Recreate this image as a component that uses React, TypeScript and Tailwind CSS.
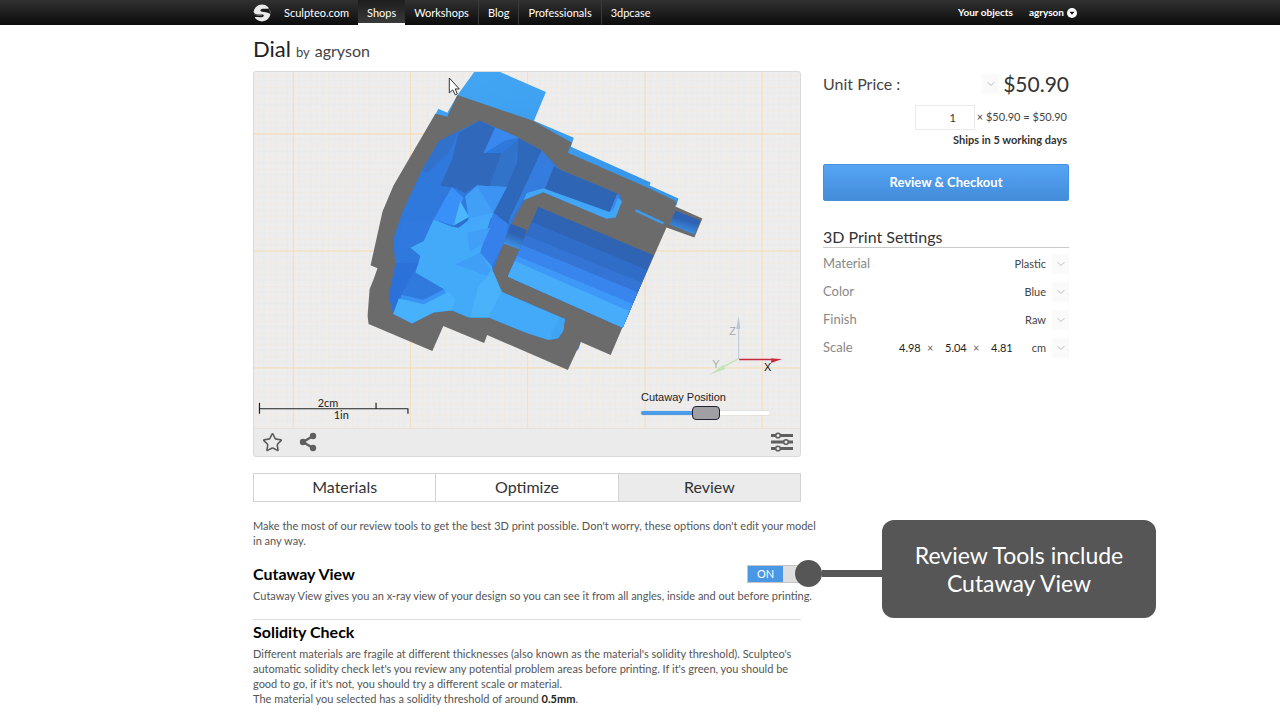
import React, { useState } from "react";
import { ChevronDown, Star } from "lucide-react";

const links = ["Sculpteo.com", "Shops", "Workshops", "Blog", "Professionals", "3dpcase"];

const settings = [
  { id: "material", label: "Material", options: ["Plastic", "Alumide", "Resin"] },
  { id: "color", label: "Color", options: ["Blue", "White", "Black"] },
  { id: "finish", label: "Finish", options: ["Raw", "Polished"] },
];

const tabs = ["Materials", "Optimize", "Review"];

function Logo() {
  return (
    <svg viewBox="0 0 18 18" className="h-[18px] w-[18px]" aria-hidden="true">
      <circle cx="9" cy="9" r="8.5" fill="#e9e9e9" />
      <path d="M18 3.8C14.500 5.600 11.500 4.200 8.600 5C6.800 5.600 7 7.400 9 7.700C12.500 8.200 15.500 8 18 10.500L16.500 6Z" fill="#1c1c1c" />
      <path d="M0 8C2 10.400 5.500 10.600 9 10.600C11.200 10.700 11.400 12.400 9.400 12.900C6 13.700 3 12.400 0 13.800Z" fill="#181818" />
      <path d="M1 9.8C3.500 11.800 6.500 11.600 9 11.400" stroke="#8b8b8b" strokeWidth="0.600" fill="none" />
    </svg>
  );
}

function Navbar() {
  return (
    <header className="bg-linear-to-b from-[#313131] to-[#0d0d0d] text-[11px] text-white">
      <div className="mx-auto flex h-[25px] max-w-[858px] items-center justify-between pl-[42px]">
        <nav className="flex h-full items-center">
          <Logo />
          <ul className="ml-1 flex h-full">
            {links.map((link) => (
              <li
                key={link}
                className={
                  link === "Shops"
                    ? "border-b-2 border-white bg-linear-to-b from-[#1d1d1d] to-[#3a3a3a]"
                    : link === "Sculpteo.com" || link === "3dpcase"
                      ? ""
                      : "border-r border-[#3a3a3a]"
                }
              >
                <a href="#" className="block px-[9px] leading-[25px]">
                  {link}
                </a>
              </li>
            ))}
          </ul>
        </nav>
        <div className="-mr-2 flex items-center gap-4 text-[10px] font-bold">
          <a href="#">Your objects</a>
          <button type="button" className="flex items-center gap-[3px]">
            agryson
            <svg viewBox="0 0 10 10" className="h-[10px] w-[10px]" aria-hidden="true">
              <circle cx="5" cy="5" r="5" fill="#fff" />
              <path d="M2.4 3.8h5.2L5 6.8z" fill="#111" />
            </svg>
          </button>
        </div>
      </div>
    </header>
  );
}

// Cut model: outer shell in grey, inner surfaces as blue facets
function Model() {
  return (
    <svg viewBox="253 72 548 357" className="block w-full" role="img" aria-label="Dial model, cut open">
      <defs>
        <pattern id="minor" x="292.5" y="134" width="11.75" height="11.75" patternUnits="userSpaceOnUse">
          <path d="M0 0H11.75M0 0V11.75" stroke="#f1e7da" strokeWidth="1.1" fill="none" />
          <path d="M0 5.9H11.75M5.9 0V11.75" stroke="#e8e8e7" strokeWidth="0.7" fill="none" />
        </pattern>
        <linearGradient id="pin" x1="0" y1="0" x2="-0.35" y2="1">
          <stop offset="0.2" stopColor="#2d62b4" />
          <stop offset="0.9" stopColor="#45a8fa" />
        </linearGradient>
        <linearGradient id="top" x1="0" y1="0" x2="0.3" y2="1">
          <stop offset="0" stopColor="#43a6f4" />
          <stop offset="1" stopColor="#3796ea" />
        </linearGradient>
      </defs>
      <rect x="253" y="72" width="548" height="357" fill="#eeeded" />
      <rect x="253" y="72" width="548" height="357" fill="url(#minor)" />
      <path
        d="M292.5 72V429M410 72V429M527.5 72V429M645.5 72V429M763 72V429M253 134H801M253 251.5H801M253 369H801"
        stroke="#f4dfc0"
        strokeWidth="1.3"
        fill="none"
      />
      <path
        d="M474 72H500L546 92L534 121L574 138L571 147L651 183L650 186L679 199L677 206L560 160L440 118L435 115L438 109L447 113L458 94Z"
        fill="url(#top)"
      />
      <path d="M581 343L577 348L578 352Z" fill="#3884f0" />
      <path
        d="M457 95L533 121L572 143L568 153L650 189L677 202L676 207L703 219L695 238L667 228L623 328L611 356L581 343L568 371L487 336L484 344L443 327L432 352L368 325L367 317L369 290L373 280L377 269L370 266L382 212L393 186L435 114L447 117Z"
        fill="#6b6b6b"
      />
      <g transform="translate(380 110) scale(0.33333)">
        <path
          d="M298 32L175 95L125 180L65 310L38 390L45 470L25 560L38 615L95 643L160 610L215 604L265 625H325L440 672L505 693L535 688L550 665L555 630L365 548L338 485L372 395L405 320L440 262L490 248L680 328L708 324L727 275L720 255L540 180L485 122L390 72Z"
          fill="#2f78dc"
        />
        <path d="M298 32L235 70L215 150L180 228L225 235L255 250L290 228L325 240L365 130L310 130L345 55Z" fill="#3069bb" />
        <path d="M235 62L175 95L125 180L140 190L205 130Z" fill="#3171c9" />
        <path d="M365 130L415 90L405 165L380 230L325 240Z" fill="#3273ca" />
        <path d="M345 53L418 84L375 92L310 132Z" fill="#3888f0" />
        <path d="M415 85L485 122L385 345L340 310L380 230L410 160Z" fill="#2e68bb" />
        <path d="M485 122L525 165L495 240L440 250L385 345L390 325Z" fill="#347cdd" />
        <path d="M522 170L540 180L720 255L690 306L495 238Z" fill="#2f65b5" />
        <path d="M340 310L385 345L372 400L335 470L300 430Z" fill="#3680ec" />
        <path d="M440 250L490 236L690 308L712 262L727 275L708 324L680 328L490 248L430 272Z" fill="#43a5f5" />
        <path d="M712 255L720 255L700 300L690 306Z" fill="#3a88ef" />
        <path d="M215 232L250 265L220 348L160 330L190 275Z" fill="#3990f8" />
        <path d="M125 330L160 330L130 395L90 415L45 430L65 340Z" fill="#3079de" />
        <path d="M255 260L290 228L380 232L335 315L265 325Z" fill="#419ff8" />
        <path
          d="M160 330L215 352L265 325L335 315L300 430L335 470L338 485L365 548L555 630L550 665L535 688L505 693L440 672L325 625H265L215 604L190 540L105 490L120 440L90 415L130 395Z"
          fill="#43aaf9"
        />
        <path d="M290 228L340 310L380 232Z" fill="#3d93f4" />
        <path d="M240 275L268 325L220 348Z" fill="#4bb8fd" />
        <path d="M215 352L268 322L262 335L235 355Z" fill="#2d70cf" />
        <path d="M265 325L340 310L335 325L270 355Z" fill="#44a7fb" />
        <path d="M260 370L330 355L310 400L270 428Z" fill="#419ff7" />
        <path d="M225 465L300 430L330 480L320 500Z" fill="#3f9ff7" />
        <path d="M45 462L115 460L60 560L38 610L25 560Z" fill="#2c70d9" />
        <path d="M105 492L190 540L125 560L62 555Z" fill="#3079dd" />
        <path d="M62 557L130 572L190 540L205 570L130 585L60 575Z" fill="#3993f3" />
        <path d="M55 568L130 585L205 548L225 570L215 604L160 610L95 643L38 615Z" fill="#47b1fc" />
        <path d="M338 485L365 548L325 625H270L295 530Z" fill="#49b2fa" />
        <path d="M540 625L555 630L550 665L535 688L510 680Z" fill="#3fa4f4" />
        <path d="M392 343L440 362L423 422L370 403Z" fill="url(#pin)" />
        <path d="M475 292L822 438L729 656L383 502Z" fill="#2f64b4" />
        <path d="M455 338L803 482L729 656L383 502Z" fill="#306dc8" />
        <path d="M437 377L786 520L729 656L383 502Z" fill="#3374d4" />
        <path d="M425 406L774 549L729 656L383 502Z" fill="#3985ee" />
        <path d="M411 440L759 584L729 656L383 502Z" fill="#3d98f8" />
        <path d="M404 455L748 606L729 656L383 502Z" fill="#47acfa" />
      </g>
      <path d="M636 211L664 224" stroke="#3f9bea" strokeWidth="2.5" />
      <path d="M676 211L701 221L695 235L670 225Z" fill="url(#pin)" />
      <path d="M449 78V93L452.5 90L455 95L457 94L455 89H459Z" fill="#fff" stroke="#333" strokeWidth="1" />
      <path d="M739.5 360V330" stroke="#b9c6d6" strokeWidth="1" />
      <path d="M737 330L739.5 317L741 330Z" fill="#b9c6d6" />
      <path d="M739 360L722 369" stroke="#c3e3b5" strokeWidth="1.5" />
      <path d="M724 366L710 376L726 370Z" fill="#c3e3b5" />
      <path d="M740 360.5H775" stroke="#c8283c" strokeWidth="1.5" />
      <path d="M772 359.5L783 360L772 364Z" fill="#c8283c" />
      <g fontFamily="Liberation Sans, sans-serif" fontSize="11">
        <text x="730" y="336" fill="#a9a9ae">Z</text>
        <text x="713" y="369" fill="#a9b5a5">Y</text>
        <text x="765" y="372" fill="#111">X</text>
      </g>
      <path d="M258.5 404V415M258 410H408M375.5 404V410M407.5 410V415" stroke="#222" strokeWidth="1.2" fill="none" />
      <g fontFamily="Lato, sans-serif" fontSize="11" fill="#222">
        <text x="317" y="408">2cm</text>
        <text x="333" y="420">1in</text>
      </g>
    </svg>
  );
}

function Viewer() {
  const [position, setPosition] = useState(50);

  return (
    <section className="relative overflow-hidden rounded-[3px] border border-[#d9d9d9] bg-[#ebebeb]">
      <Model />
      <div className="absolute right-[30px] bottom-[35px] flex w-[129px] flex-col">
        <label htmlFor="cutaway" className="font-['Liberation_Sans',sans-serif] text-[11px] leading-4 text-[#222]">
          Cutaway Position
        </label>
        <div className="flex h-4 items-center">
          <input
            id="cutaway"
            type="range"
            value={position}
            onChange={(e) => setPosition(Number(e.target.value))}
            style={{
              backgroundImage: `linear-gradient(to right, #4a9be8 ${position}%, #fff ${position}%)`,
            }}
            className="h-1 w-full appearance-none rounded-full shadow-[0_0_1px_#999] [&::-webkit-slider-thumb]:h-[14px] [&::-webkit-slider-thumb]:w-[28px] [&::-webkit-slider-thumb]:appearance-none [&::-webkit-slider-thumb]:rounded [&::-webkit-slider-thumb]:border [&::-webkit-slider-thumb]:border-[#222233] [&::-webkit-slider-thumb]:bg-[#a09fa3]"
          />
        </div>
      </div>
      <div className="flex h-[28px] items-center border-t border-[#e6e3df] pr-[7px] pl-2 text-[#5a5a5a]">
        <button type="button" aria-label="Add to favourites">
          <Star className="h-[21px] w-[21px]" strokeWidth={1.8} strokeLinejoin="miter" />
        </button>
        <button type="button" aria-label="Share" className="ml-4">
          <svg viewBox="0 0 18 20" className="h-5 w-[18px]" aria-hidden="true">
            <path d="M14 4L4 10L14 16" fill="none" stroke="#5f5f5f" strokeWidth="2.4" />
            <circle cx="14" cy="4" r="3.2" fill="#5f5f5f" />
            <circle cx="4" cy="10" r="3.2" fill="#5f5f5f" />
            <circle cx="14" cy="16" r="3.2" fill="#5f5f5f" />
          </svg>
        </button>
        <button type="button" aria-label="View options" className="ml-auto">
          <svg viewBox="0 0 22 20" className="h-5 w-[22px]" aria-hidden="true">
            <path d="M0 3.5H22M0 10H22M0 16.5H22" stroke="#5f5f5f" strokeWidth="2.8" />
            <g fill="#ebebeb" stroke="#5f5f5f" strokeWidth="1.6">
              <circle cx="7" cy="3.5" r="2.3" />
              <circle cx="15" cy="10" r="2.3" />
              <circle cx="7" cy="16.5" r="2.3" />
            </g>
          </svg>
        </button>
      </div>
    </section>
  );
}

function Chevron() {
  return (
    <span className="pointer-events-none col-start-1 row-start-1 flex h-5 w-[17px] items-center justify-center justify-self-end bg-[#fafafa]">
      <ChevronDown className="h-3 w-3 text-[#bbb]" />
    </span>
  );
}

function Select({ id, label, options }: { id: string; label?: string; options: string[] }) {
  return (
    <div className="grid items-center">
      <select
        id={id}
        aria-label={label}
        className="col-start-1 row-start-1 appearance-none bg-transparent pr-[23px] text-[11px] leading-5 text-[#444] [text-align-last:right]"
      >
        {options.map((option) => (
          <option key={option}>{option}</option>
        ))}
      </select>
      <Chevron />
    </div>
  );
}

function Sidebar() {
  return (
    <aside className="w-[246px] shrink-0 text-[#444]">
      <div className="flex h-[26px] items-center">
        <span className="flex-1 text-[16px]">Unit Price :</span>
        <button type="button" aria-label="Choose currency" className="mr-1 grid">
          <Chevron />
        </button>
        <span className="text-[21px] text-[#333]">$50.90</span>
      </div>
      <div className="mt-2 flex items-center justify-end pr-[2px] text-[11px]">
        <input
          type="text"
          aria-label="Quantity"
          defaultValue="1"
          className="mr-[2px] h-[25px] w-[60px] border border-[#eaeaea] pr-[18px] text-right text-[#333]"
        />
        × $50.90 = $50.90
      </div>
      <p className="mt-[2px] pr-[2px] text-right text-[11px] leading-4 font-bold text-[#333]">Ships in 5 working days</p>
      <button
        type="button"
        className="mt-4 h-[37px] w-full rounded-[2px] border border-[#4590da] bg-linear-to-b from-[#57a5f6] to-[#428cd9] text-[13px] font-bold text-white"
      >
        Review &amp; Checkout
      </button>

      <h2 className="mt-[26px] border-b border-[#c9c9c9] text-[16px] leading-5 text-[#333]">3D Print Settings</h2>
      <div className="mt-[2px]">
        {settings.map((s) => (
          <div key={s.id} className="flex h-[28px] items-center justify-between">
            <label htmlFor={s.id} className="text-[13px] text-[#888]">
              {s.label}
            </label>
            <Select id={s.id} options={s.options} />
          </div>
        ))}
        <div className="flex h-[28px] items-center text-[11px] text-[#222]">
          <label htmlFor="scale-x" className="flex-1 text-[13px] text-[#888]">
            Scale
          </label>
          <input id="scale-x" defaultValue="4.98" className="w-[24px]" />
          <span className="w-[22px] pl-1 text-[#666]">×</span>
          <input aria-label="Scale y" defaultValue="5.04" className="w-[24px]" />
          <span className="w-[22px] pl-1 text-[#666]">×</span>
          <input aria-label="Scale z" defaultValue="4.81" className="w-[24px]" />
          <div className="ml-4">
            <Select id="unit" label="Unit" options={["cm", "in"]} />
          </div>
        </div>
      </div>
    </aside>
  );
}

function Callout() {
  return (
    <div className="absolute -top-[45px] left-[48px] z-10 flex items-start">
      <span className="mt-[40px] h-[27px] w-[27px] rounded-full bg-[#565656]" />
      <span className="mt-[50px] h-[7px] w-[60px] bg-[#565656]" />
      <p className="flex h-[98px] w-[274px] items-center justify-center rounded-xl bg-[#565656] text-center text-[23px] leading-[28px] whitespace-nowrap text-white">
        Review Tools include
        <br />
        Cutaway View
      </p>
    </div>
  );
}

function App() {
  const [on, setOn] = useState(true);

  return (
    <div className="overflow-hidden bg-white font-[Lato,sans-serif]">
      <Navbar />
      <main className="mx-auto max-w-[858px] pl-[42px]">
        <h1 className="flex h-[46px] items-baseline gap-[5px] pt-[9px] text-[22px] leading-[30px] text-[#222]">
          Dial <span className="text-[13px] text-[#444]">by</span> <span className="text-[16px] text-[#444]">agryson</span>
        </h1>
        <div className="flex gap-[22px]">
          <div className="min-w-0 flex-1">
            <Viewer />
            <div role="tablist" className="mt-4 flex border border-[#d3d3d3] text-[16px] text-[#333]">
              {tabs.map((tab) => (
                <button
                  key={tab}
                  type="button"
                  role="tab"
                  aria-selected={tab === "Review"}
                  className="h-[27px] flex-1 border-r border-[#d3d3d3] last:border-r-0 aria-selected:bg-[#ebebeb]"
                >
                  {tab}
                </button>
              ))}
            </div>
            <div className="text-[11px] leading-[15px] text-[#555]">
              <p className="-mr-5 mt-4">
                Make the most of our review tools to get the best 3D print possible. Don't worry, these options don't edit your
                model in any way.
              </p>
              <div className="mt-4 flex h-[20px] items-center justify-between">
                <h3 className="text-[16px] font-bold text-black">Cutaway View</h3>
                <div className="relative">
                  <label className="flex h-[18px] w-[54px] cursor-pointer border border-[#c5c5c5] bg-[#dedede] text-white">
                    <input
                      type="checkbox"
                      aria-label="Cutaway View"
                      checked={on}
                      onChange={() => setOn(!on)}
                      className="sr-only"
                    />
                    <span className="w-[35px] bg-[#4a97e6] text-center leading-4">{on ? "ON" : "OFF"}</span>
                  </label>
                  <Callout />
                </div>
              </div>
              <p className="-mr-5 mt-1">
                Cutaway View gives you an x-ray view of your design so you can see it from all angles, inside and out before
                printing.
              </p>
              <div className="mt-4 border-t border-[#dcdcdc] pt-[2px]">
                <h3 className="text-[16px] leading-5 font-bold text-black">Solidity Check</h3>
                <p className="mt-1">
                  Different materials are fragile at different thicknesses (also known as the material's solidity threshold).
                  Sculpteo's automatic solidity check let's you review any potential problem areas before printing. If it's
                  green, you should be good to go, if it's not, you should try a different scale or material.
                  <br />
                  The material you selected has a solidity threshold of around <b className="text-[#222]">0.5mm</b>.
                </p>
              </div>
            </div>
          </div>
          <Sidebar />
        </div>
      </main>
    </div>
  );
}

export default App;
